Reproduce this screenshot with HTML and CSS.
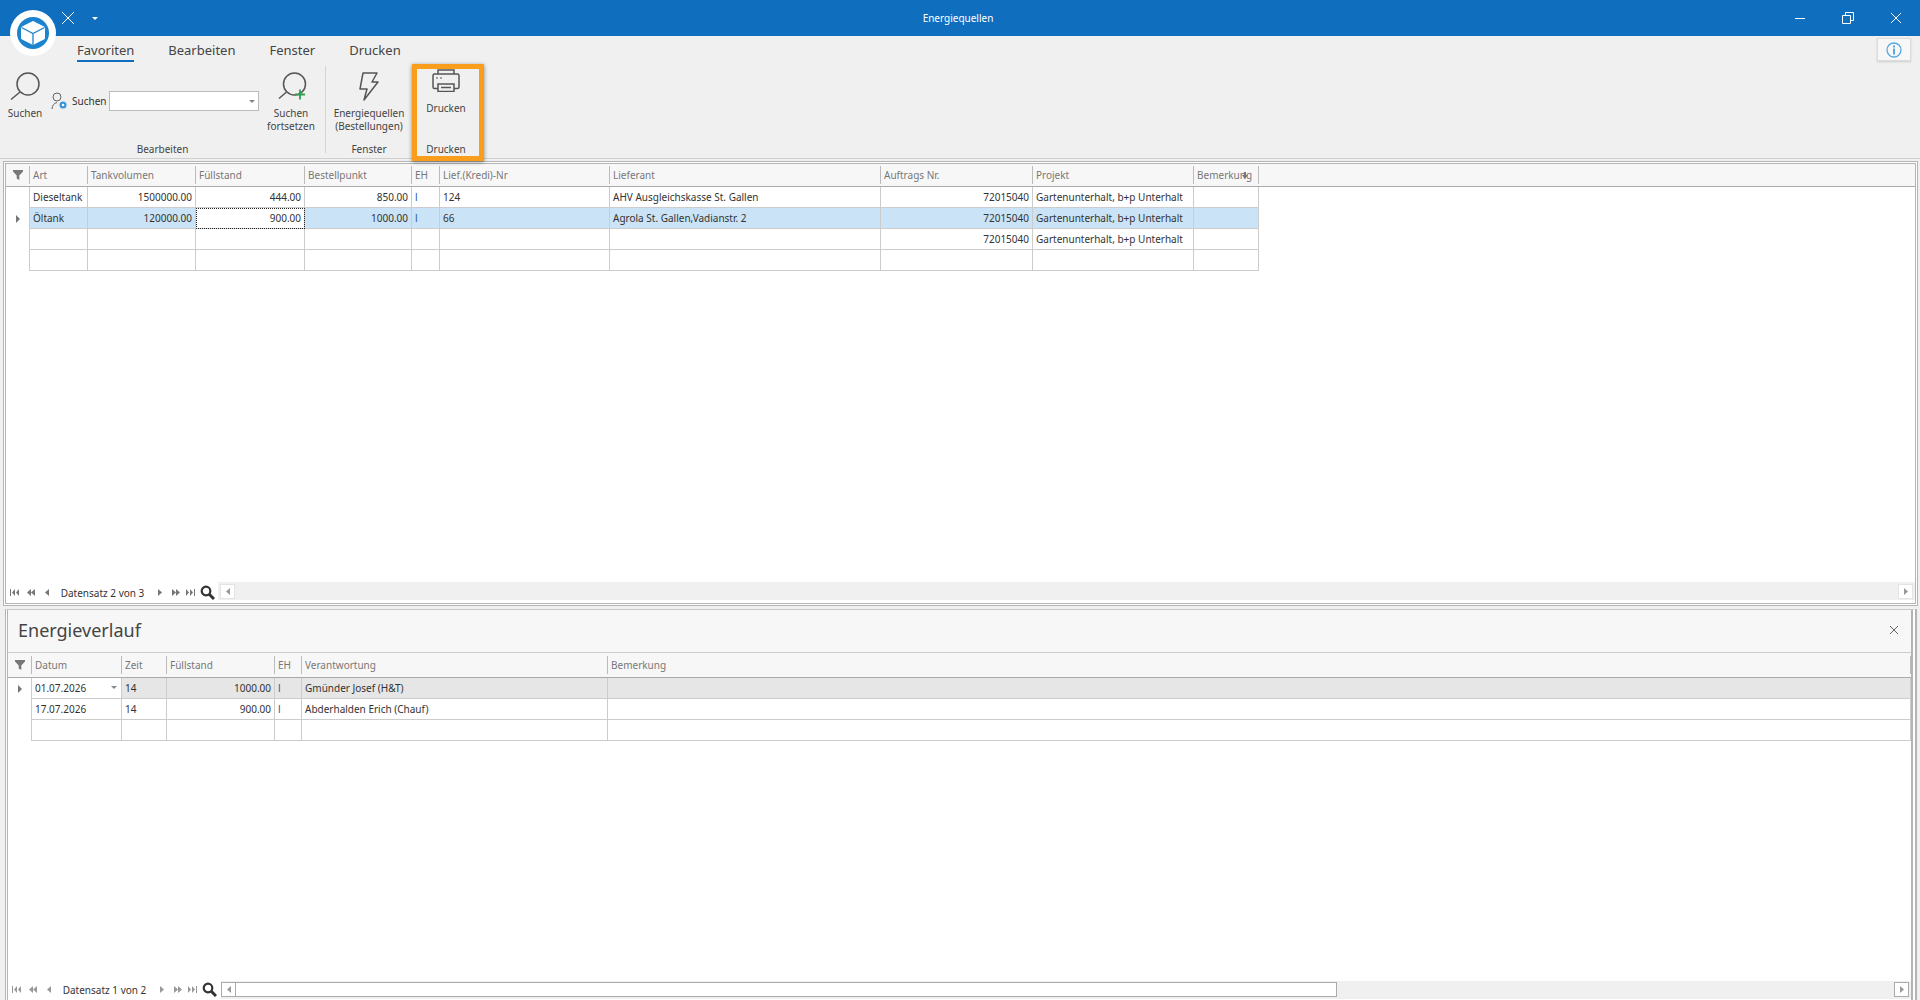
FILE: index.html
```html
<!DOCTYPE html>
<html lang="de">
<head>
    <meta charset="UTF-8">
    <meta name="viewport" content="width=device-width, initial-scale=1.0">
    <title>Energiequellen</title>
    <link rel="stylesheet" href="styles.css">
</head>
<body>
    <svg class="defs" width="0" height="0">
        <symbol id="nav-first" viewBox="0 0 9 7"><path d="M0 0h1v7H0zM5 0v7L2 3.500zM9 0v7L6 3.500z"/></symbol>
        <symbol id="nav-pprev" viewBox="0 0 8 7"><path d="M4 0v7L0 3.500zM8 0v7L4 3.500z"/></symbol>
        <symbol id="nav-prev" viewBox="0 0 4 7"><path d="M4 0v7L0 3.500z"/></symbol>
        <symbol id="nav-next" viewBox="0 0 4 7"><path d="M0 0v7l4-3.500z"/></symbol>
        <symbol id="nav-nnext" viewBox="0 0 8 7"><path d="M0 0v7l4-3.500zM4 0v7l4-3.500z"/></symbol>
        <symbol id="nav-last" viewBox="0 0 9 7"><path d="M0 0v7l3-3.500zM4 0v7l3-3.500zM8 0h1v7H8z"/></symbol>
        <symbol id="nav-find" viewBox="0 0 15 15"><circle cx="6" cy="6" r="4.300" fill="none" stroke="currentColor" stroke-width="2.200"/><path d="M9 9l5 5" stroke="currentColor" stroke-width="3"/></symbol>
    </svg>

    <header class="titlebar">
        <svg class="tb-x" width="14" height="14" viewBox="0 0 14 14"><path d="M1 1l12 12M13 1L1 13" stroke="#fff" fill="none"/></svg>
        <span class="tb-arrow"></span>
        <span class="tb-title">Energiequellen</span>
        <div class="win-btns">
            <svg width="12" height="12" viewBox="0 0 12 12"><path d="M1 6.500h10" stroke="#fff"/></svg>
            <svg width="12" height="12" viewBox="0 0 12 12"><path d="M.5 3.500h8v8h-8zM3.500 3.500v-3h8v8h-3" stroke="#fff" fill="none"/></svg>
            <svg width="12" height="12" viewBox="0 0 12 12"><path d="M1 1l10 10M11 1L1 11" stroke="#fff" fill="none"/></svg>
        </div>
    </header>

    <div class="logo">
        <svg width="46" height="46" viewBox="0 0 46 46">
            <circle cx="23" cy="23" r="23" fill="#fff"/>
            <circle cx="23" cy="23" r="16" fill="#1c83cf"/>
            <path d="M23 11.500l11.500 5.800v11.400L23 34.500l-11.500-5.800V17.300z" fill="#fff" stroke="#fff" stroke-linejoin="round"/>
            <path d="M11.500 17.500L23 23.500l11.500-6M23 23.500V35" fill="none" stroke="#1c83cf" stroke-width="1.300"/>
        </svg>
    </div>

    <section class="ribbon">
        <nav class="tabs">
            <a class="tab active">Favoriten</a>
            <a class="tab">Bearbeiten</a>
            <a class="tab">Fenster</a>
            <a class="tab">Drucken</a>
        </nav>
        <button class="info-btn">
            <svg width="18" height="18" viewBox="0 0 18 18"><circle cx="9" cy="9" r="7" fill="none" stroke="#5aa9e0" stroke-width="1.300"/><path d="M8 4.500h2v2H8zM8 7.500h2v6H8z" fill="#5aa9e0"/></svg>
        </button>
        <div class="groups">
            <div class="group group-edit">
                <div class="group-body">
                    <div class="big-btn btn-search">
                        <svg width="32" height="30" viewBox="0 0 32 30"><circle cx="19" cy="13" r="11" fill="none" stroke="#555" stroke-width="1.500"/><path d="M11 21L2 28.500" stroke="#555" stroke-width="1.500"/></svg>
                        <span>Suchen</span>
                    </div>
                    <div class="search-field">
                        <svg width="16" height="18" viewBox="0 0 16 18"><circle cx="6" cy="5" r="4" fill="none" stroke="#666"/><path d="M1 17c0-3 2-6 5-6.500" fill="none" stroke="#666"/><circle cx="12" cy="13" r="3.500" fill="#3a94d8"/><circle cx="12" cy="13" r="1.300" fill="#fff"/></svg>
                        <label>Suchen</label>
                        <div class="combo"><span class="combo-arrow"></span></div>
                    </div>
                    <div class="big-btn btn-next">
                        <svg width="32" height="30" viewBox="0 0 32 30"><circle cx="19.500" cy="13" r="11" fill="none" stroke="#555" stroke-width="1.500"/><path d="M11.500 21L4 27.500" stroke="#555" stroke-width="1.500"/><path d="M20 23.500h10M25 18.500v10" stroke="#2e9e4f" stroke-width="1.800"/></svg>
                        <span>Suchen<br>fortsetzen</span>
                    </div>
                </div>
                <div class="group-label">Bearbeiten</div>
            </div>
            <div class="group-sep"></div>
            <div class="group group-window">
                <div class="group-body">
                    <div class="big-btn btn-energy">
                        <svg width="20" height="30" viewBox="0 0 20 30"><path d="M4 2h14l-5 9h6L5 29l3-11H1z" fill="none" stroke="#555" stroke-width="1.500" stroke-linejoin="round"/></svg>
                        <span>Energiequellen<br>(Bestellungen)</span>
                    </div>
                </div>
                <div class="group-label">Fenster</div>
            </div>
            <div class="group group-print">
                <div class="group-body">
                    <div class="big-btn btn-print">
                        <svg width="28" height="23" viewBox="0 0 28 23"><path d="M6 5V1h16v4" fill="none" stroke="#555" stroke-width="1.500"/><rect x="1" y="5" width="26" height="14.500" rx="1.500" fill="none" stroke="#555" stroke-width="1.500"/><path d="M4 9h2M8 9h2" stroke="#555" stroke-width="1.200"/><rect x="6" y="15" width="16" height="7.500" fill="#f0f0f0" stroke="#555" stroke-width="1.500"/><path d="M9 18.500h10" stroke="#555" stroke-width="1.500"/></svg>
                        <span>Drucken</span>
                    </div>
                </div>
                <div class="group-label">Drucken</div>
            </div>
        </div>
    </section>

    <main class="content">
        <section class="frame frame-top">
            <div class="grid grid-a">
                <div class="row head">
                    <div class="hc filter"><svg width="10" height="10" viewBox="0 0 10 10"><path d="M0 0h10v1.500L6.300 5.500V10L3.700 8.500v-3L0 1.500z"/></svg></div>
                    <div class="hc">Art</div><div class="hc">Tankvolumen</div><div class="hc">Füllstand</div><div class="hc">Bestellpunkt</div><div class="hc">EH</div><div class="hc">Lief.(Kredi)-Nr</div><div class="hc">Lieferant</div><div class="hc">Auftrags Nr.</div><div class="hc">Projekt</div>
                    <div class="hc hc-pin">Bemerkung<svg width="8" height="8" viewBox="0 0 8 8"><path d="M1 3h6L4 7zM3 0h2v3H3z"/></svg></div>
                </div>
                <div class="row">
                    <div class="ind"></div><div class="c">Dieseltank</div><div class="c num">1500000.00</div><div class="c num">444.00</div><div class="c num">850.00</div><div class="c eh">l</div><div class="c">124</div><div class="c">AHV Ausgleichskasse St. Gallen</div><div class="c num">72015040</div><div class="c">Gartenunterhalt, b+p Unterhalt</div><div class="c"></div>
                </div>
                <div class="row selected">
                    <div class="ind"><i class="tri"></i></div><div class="c">Öltank</div><div class="c num">120000.00</div><div class="c num focus">900.00</div><div class="c num">1000.00</div><div class="c eh">l</div><div class="c">66</div><div class="c">Agrola St. Gallen,Vadianstr. 2</div><div class="c num">72015040</div><div class="c">Gartenunterhalt, b+p Unterhalt</div><div class="c"></div>
                </div>
                <div class="row">
                    <div class="ind"></div><div class="c"></div><div class="c"></div><div class="c"></div><div class="c"></div><div class="c"></div><div class="c"></div><div class="c"></div><div class="c num">72015040</div><div class="c">Gartenunterhalt, b+p Unterhalt</div><div class="c"></div>
                </div>
                <div class="row">
                    <div class="ind"></div><div class="c"></div><div class="c"></div><div class="c"></div><div class="c"></div><div class="c"></div><div class="c"></div><div class="c"></div><div class="c"></div><div class="c"></div><div class="c"></div>
                </div>
            </div>
            <div class="navbar">
                <div class="nav-btns">
                    <svg class="n-first"><use href="#nav-first"/></svg>
                    <svg class="n-pprev"><use href="#nav-pprev"/></svg>
                    <svg class="n-prev"><use href="#nav-prev"/></svg>
                    <span class="nav-text">Datensatz 2 von 3</span>
                    <svg class="n-next"><use href="#nav-next"/></svg>
                    <svg class="n-nnext"><use href="#nav-nnext"/></svg>
                    <svg class="n-last"><use href="#nav-last"/></svg>
                    <svg class="n-find"><use href="#nav-find"/></svg>
                </div>
                <div class="hscroll flat">
                    <span class="sb-btn"><svg class="n-prev"><use href="#nav-prev"/></svg></span>
                    <span class="sb-space"></span>
                    <span class="sb-btn"><svg class="n-next"><use href="#nav-next"/></svg></span>
                </div>
            </div>
        </section>

        <section class="frame frame-bottom">
            <div class="panel-head">
                <h2>Energieverlauf</h2>
                <svg width="10" height="10" viewBox="0 0 10 10"><path d="M1 1l8 8M9 1L1 9" stroke="#666" fill="none"/></svg>
            </div>
            <div class="grid grid-b">
                <div class="row head">
                    <div class="hc filter"><svg width="10" height="10" viewBox="0 0 10 10"><path d="M0 0h10v1.500L6.300 5.500V10L3.700 8.500v-3L0 1.500z"/></svg></div>
                    <div class="hc">Datum</div><div class="hc">Zeit</div><div class="hc">Füllstand</div><div class="hc">EH</div><div class="hc">Verantwortung</div><div class="hc">Bemerkung</div>
                </div>
                <div class="row current">
                    <div class="ind"><i class="tri"></i></div><div class="c date">01.07.2026<span class="combo-arrow"></span></div><div class="c">14</div><div class="c num">1000.00</div><div class="c eh">l</div><div class="c">Gmünder Josef (H&amp;T)</div><div class="c"></div>
                </div>
                <div class="row">
                    <div class="ind"></div><div class="c date">17.07.2026</div><div class="c">14</div><div class="c num">900.00</div><div class="c eh">l</div><div class="c">Abderhalden Erich (Chauf)</div><div class="c"></div>
                </div>
                <div class="row">
                    <div class="ind"></div><div class="c"></div><div class="c"></div><div class="c"></div><div class="c"></div><div class="c"></div><div class="c"></div>
                </div>
            </div>
            <div class="navbar">
                <div class="nav-btns dim">
                    <svg class="n-first"><use href="#nav-first"/></svg>
                    <svg class="n-pprev"><use href="#nav-pprev"/></svg>
                    <svg class="n-prev"><use href="#nav-prev"/></svg>
                    <span class="nav-text">Datensatz 1 von 2</span>
                    <svg class="n-next"><use href="#nav-next"/></svg>
                    <svg class="n-nnext"><use href="#nav-nnext"/></svg>
                    <svg class="n-last"><use href="#nav-last"/></svg>
                    <svg class="n-find"><use href="#nav-find"/></svg>
                </div>
                <div class="hscroll">
                    <span class="sb-btn"><svg class="n-prev"><use href="#nav-prev"/></svg></span>
                    <span class="sb-thumb"></span>
                    <span class="sb-space"></span>
                    <span class="sb-btn"><svg class="n-next"><use href="#nav-next"/></svg></span>
                </div>
            </div>
        </section>
    </main>
</body>
</html>
```

FILE: styles.css
```css
* {
    box-sizing: border-box;
}
html, body {
    margin: 0;
    height: 1000px;
    overflow: hidden;
}
body {
    display: flex;
    flex-direction: column;
    background-color: #f0f0f0;
    font-family: "Noto Sans", Arial, sans-serif;
    font-size: 10px;
    color: #333;
}
.defs {
    position: absolute;
}

/* title bar */
.titlebar {
    height: 36px;
    flex: none;
    display: flex;
    align-items: center;
    position: relative;
    background-color: #106ebe;
    color: #fff;
}
.tb-x {
    margin-left: 61px;
}
.tb-arrow {
    margin-left: 17px;
    border: 3px solid transparent;
    border-top: 3px solid #fff;
    margin-top: 3px;
}
.tb-title {
    position: absolute;
    left: 0;
    right: 4px;
    text-align: center;
    font-size: 10px;
}
.win-btns {
    margin-left: auto;
    margin-right: 18px;
    display: flex;
    gap: 36px;
}
.logo {
    position: absolute;
    left: 10px;
    top: 10px;
    width: 46px;
    height: 46px;
    z-index: 2;
}

/* ribbon */
.ribbon {
    height: 123px;
    flex: none;
    position: relative;
    z-index: 1;
    border-bottom: 1px solid #d0d0d0;
}
.tabs {
    display: flex;
    gap: 34px;
    padding-left: 77px;
    height: 28px;
}
.tab {
    height: 26px;
    padding-top: 5px;
    font-size: 13px;
    line-height: 18px;
    color: #444;
}
.tab.active {
    border-bottom: 2px solid #106ebe;
}
.info-btn {
    position: absolute;
    right: 9px;
    top: 2px;
    width: 34px;
    height: 23px;
    padding: 0;
    display: flex;
    align-items: center;
    justify-content: center;
    background-color: #f7f7f7;
    border: 1px solid #ddd;
    box-shadow: 0 1px 2px #ccc;
}
.groups {
    display: flex;
    align-items: flex-start;
}
.group {
    height: 92px;
    display: flex;
    flex-direction: column;
}
.group-body {
    flex: 1;
    display: flex;
    align-items: flex-start;
}
.group-label {
    height: 14px;
    line-height: 14px;
    text-align: center;
    color: #444;
}
.group-edit {
    width: 325px;
}
.group-sep {
    width: 1px;
    height: 87px;
    margin-top: 2px;
    background-color: #d4d4d4;
}
.group-window {
    width: 86px;
}
.group-print {
    width: 72px;
    height: 97px;
    padding-right: 4px;
    border: 5px solid #f99d1c;
    box-shadow: 0 1px 4px rgba(0, 0, 0, 0.45);
}
.big-btn {
    display: flex;
    flex-direction: column;
    align-items: center;
    text-align: center;
    line-height: 13px;
    color: #444;
}
.big-btn svg {
    flex: none;
    margin-bottom: 6px;
}
.btn-search {
    width: 36px;
    margin-left: 7px;
    padding-top: 7px;
}
.btn-next {
    width: 60px;
    margin-left: 2px;
    padding-top: 7px;
}
.btn-energy {
    width: 86px;
    padding-top: 7px;
}
.btn-print {
    width: 100%;
}
.btn-print svg {
    margin-bottom: 10px;
}
.search-field {
    display: flex;
    align-items: center;
    margin-left: 8px;
    margin-top: 27px;
}
.search-field label {
    width: 37px;
    margin-left: 5px;
}
.combo {
    width: 150px;
    height: 20px;
    position: relative;
    background-color: #fff;
    border: 1px solid #bbb;
}
.combo-arrow {
    position: absolute;
    right: 3px;
    top: 8px;
    border: 3px solid transparent;
    border-top: 3px solid #888;
}

/* panels */
.content {
    flex: 1;
    display: flex;
    flex-direction: column;
    gap: 3px;
    padding-top: 2px;
    min-height: 0;
}
.frame {
    background-color: #fff;
    border: 3px double #b4b4b4;
    display: flex;
    flex-direction: column;
}
.frame-top {
    height: 445px;
    flex: none;
    margin: 0 2px 0 3px;
}
.frame-bottom {
    flex: 1;
    margin: 0 3px 0 5px;
    border-top: 1px solid #c8c8c8;
    border-right-width: 6px;
    border-bottom: none;
    min-height: 0;
}
.grid {
    flex: 1;
    min-height: 0;
}
.row {
    display: grid;
    height: 21px;
}
.grid-a .row {
    grid-template-columns: 24px 58px 108px 109px 107px 28px 170px 271px 152px 161px 65px;
}
.grid-b .row {
    grid-template-columns: 24px 90px 45px 108px 27px 306px 1303px;
}
.row.head {
    height: 25px;
    align-items: center;
    border-bottom: 1px solid #aaa;
    background-color: #f7f7f7;
}
.grid-a .row.head {
    height: 23px;
}
.hc {
    height: 18px;
    line-height: 18px;
    padding-left: 3px;
    color: #777;
    border-right: 1px solid #bbb;
    white-space: nowrap;
    overflow: hidden;
}
.hc.filter {
    display: flex;
    align-items: center;
    justify-content: center;
    padding: 0;
    fill: #777;
}
.hc-pin {
    position: relative;
}
.hc-pin svg {
    position: absolute;
    right: 9px;
    top: 6px;
    fill: #777;
}
.ind {
    display: flex;
    align-items: center;
    justify-content: center;
    border-right: 1px solid #ccc;
}
.tri {
    border: 4px solid transparent;
    border-left: 4px solid #777;
    border-right: none;
}
.c {
    position: relative;
    height: 21px;
    line-height: 20px;
    padding: 0 3px;
    background-color: #fff;
    border-right: 1px solid #ccc;
    border-bottom: 1px solid #ccc;
    white-space: nowrap;
    overflow: hidden;
}
.num {
    text-align: right;
}
.eh {
    color: #1e5a94;
}
.row.selected .c {
    background-color: #cbe3f6;
}
.row.selected .c.focus {
    background-color: #fff;
    outline: 1px dotted #222;
    outline-offset: -1px;
}
.row.current .c {
    background-color: #e6e6e6;
}
.row.current .c.date {
    background-color: #fff;
}
.date .combo-arrow {
    right: 4px;
}

/* navigator */
.navbar {
    height: 21px;
    flex: none;
    display: flex;
    align-items: center;
}
.nav-btns {
    display: flex;
    align-items: center;
    fill: #777;
    height: 100%;
}
.nav-btns.dim {
    fill: #999;
}
.nav-btns svg, .sb-btn svg {
    height: 7px;
}
.nav-text {
    width: 107px;
    text-align: center;
    color: #333;
}
.n-first, .n-last {
    width: 9px;
}
.n-pprev, .n-nnext {
    width: 8px;
}
.n-prev, .n-next {
    width: 4px;
}
.nav-btns .n-first {
    margin-left: 4px;
}
.nav-btns .n-pprev {
    margin-left: 8px;
}
.nav-btns .n-prev {
    margin-left: 10px;
}
.nav-btns .n-next {
    margin-left: 2px;
}
.nav-btns .n-nnext {
    margin-left: 10px;
}
.nav-btns .n-last {
    margin-left: 6px;
}
.nav-btns .n-find {
    width: 15px;
    height: 15px;
    margin-left: 5px;
    color: #333;
}
.hscroll {
    flex: 1;
    height: 18px;
    margin-left: 4px;
    display: flex;
    align-items: center;
    padding: 0 2px 0 0;
    background-color: #f0f0f0;
}
.hscroll.flat {
    align-self: flex-start;
    margin-left: 3px;
    padding-left: 2px;
}
.sb-btn {
    width: 15px;
    height: 15px;
    flex: none;
    display: flex;
    align-items: center;
    justify-content: center;
    fill: #999;
    background-color: #fff;
    border: 1px solid #aaa;
}
.hscroll.flat .sb-btn {
    border-color: #e4e4e4;
}
.sb-thumb {
    width: 1101px;
    height: 15px;
    background-color: #fff;
    border: 1px solid #aaa;
    border-left: none;
}
.sb-space {
    flex: 1;
}

/* lower panel */
.panel-head {
    height: 43px;
    flex: none;
    display: flex;
    align-items: center;
    justify-content: space-between;
    padding: 0 12px 3px 10px;
    background-color: #f7f7f7;
    border-bottom: 1px solid #ccc;
}
.panel-head h2 {
    margin: 0;
    font-weight: normal;
    font-size: 18px;
    color: #444;
}
```
